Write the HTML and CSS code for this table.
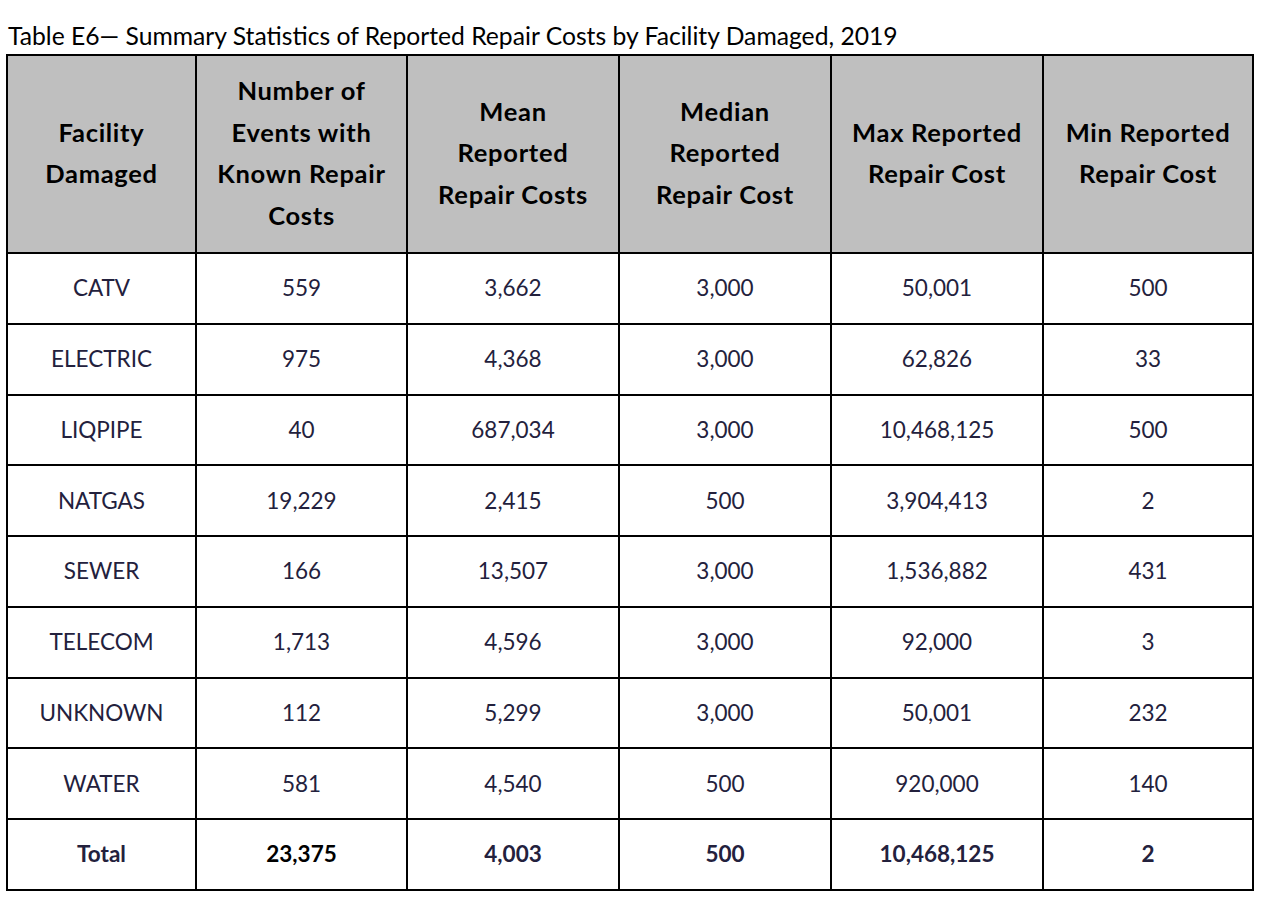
FILE: index.html
```html
<!DOCTYPE html>
<html>
<head>
<meta charset="utf-8">
<link rel="stylesheet" href="styles.css">
</head>
<body>
<div class="page">
  <div class="title">Table E6— Summary Statistics of Reported Repair Costs by Facility Damaged, 2019</div>
  <table class="stats">
    <colgroup>
      <col class="c1"><col class="c2"><col class="c3"><col class="c4"><col class="c5"><col class="c6">
    </colgroup>
    <thead>
      <tr>
        <th>Facility<br>Damaged</th>
        <th>Number of<br>Events with<br>Known Repair<br>Costs</th>
        <th>Mean<br>Reported<br>Repair Costs</th>
        <th>Median<br>Reported<br>Repair Cost</th>
        <th>Max Reported<br>Repair Cost</th>
        <th>Min Reported<br>Repair Cost</th>
      </tr>
    </thead>
    <tbody>
      <tr><td>CATV</td><td>559</td><td>3,662</td><td>3,000</td><td>50,001</td><td>500</td></tr>
      <tr><td>ELECTRIC</td><td>975</td><td>4,368</td><td>3,000</td><td>62,826</td><td>33</td></tr>
      <tr><td>LIQPIPE</td><td>40</td><td>687,034</td><td>3,000</td><td>10,468,125</td><td>500</td></tr>
      <tr><td>NATGAS</td><td>19,229</td><td>2,415</td><td>500</td><td>3,904,413</td><td>2</td></tr>
      <tr><td>SEWER</td><td>166</td><td>13,507</td><td>3,000</td><td>1,536,882</td><td>431</td></tr>
      <tr><td>TELECOM</td><td>1,713</td><td>4,596</td><td>3,000</td><td>92,000</td><td>3</td></tr>
      <tr><td>UNKNOWN</td><td>112</td><td>5,299</td><td>3,000</td><td>50,001</td><td>232</td></tr>
      <tr><td>WATER</td><td>581</td><td>4,540</td><td>500</td><td>920,000</td><td>140</td></tr>
      <tr class="total"><td>Total</td><td class="black">23,375</td><td>4,003</td><td>500</td><td>10,468,125</td><td>2</td></tr>
    </tbody>
  </table>
</div>
</body>
</html>
```

FILE: styles.css
```css
html, body {
  margin: 0;
  padding: 0;
  background: #ffffff;
}

.page {
  padding: 21px 0 0 8px;
  font-family: Lato, "Liberation Sans", sans-serif;
}

.title {
  font-size: 24.7px;
  line-height: 30px;
  color: #000000;
  margin-bottom: 3px;
  white-space: nowrap;
}

.stats {
  border-collapse: collapse;
  table-layout: fixed;
  width: 1246px;
  margin-left: -2px;
  font-size: 22.5px;
}

.c1 { width: 189px; }
.c2 { width: 211px; }
.c3 { width: 212px; }
.c4 { width: 212px; }
.c5 { width: 212px; }
.c6 { width: 210px; }

.stats th,
.stats td {
  border: 2px solid #000000;
  text-align: center;
  vertical-align: middle;
  padding: 0;
}

.stats th {
  background: #bfbfbf;
  color: #000000;
  font-weight: 700;
  font-size: 25.5px;
  letter-spacing: 0.7px;
  line-height: 41.5px;
  height: 194px;
  padding-bottom: 2px;
}

.stats td {
  color: #23213d;
  height: 68.75px;
  line-height: 26px;
}

.stats .total td {
  font-weight: 700;
}

.stats td.black {
  color: #000000;
}
```
